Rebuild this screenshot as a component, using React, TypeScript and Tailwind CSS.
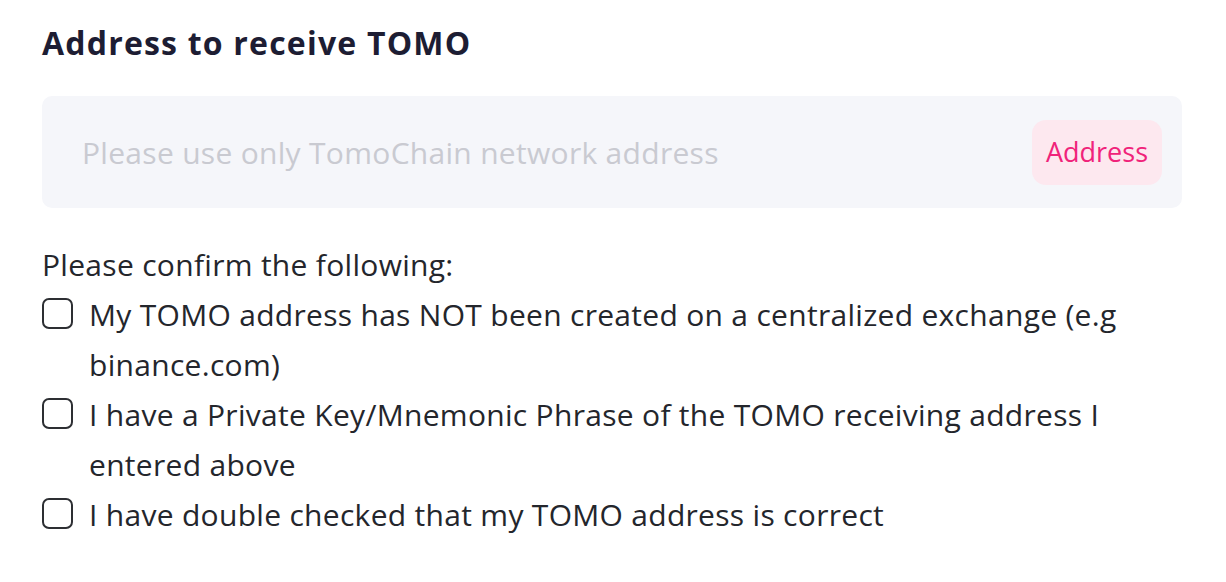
import { useState } from "react";

const confirmations = [
  "My TOMO address has NOT been created on a centralized exchange (e.g binance.com)",
  "I have a Private Key/Mnemonic Phrase of the TOMO receiving address I entered above",
  "I have double checked that my TOMO address is correct",
];

export default function App() {
  const [checked, setChecked] = useState<boolean[]>([false, false, false]);

  return (
    <div className="min-h-[582px] bg-white pl-[42px] pr-[44px] pt-[20px] font-['Open_Sans',sans-serif]">
      <h2 className="text-[32px] leading-[46px] font-bold tracking-[1.2px] text-[#1d1d33]">Address to receive TOMO</h2>

      <div className="mt-[30px] flex h-[112px] items-center justify-between rounded-[10px] bg-[#f5f6fa] pl-[40px] pr-[20px]">
        <input
          type="text"
          placeholder="Please use only TomoChain network address"
          className="flex-1 bg-transparent text-[30px] tracking-[0.3px] text-[#22252b] outline-none placeholder:text-[#c9cad1]"
        />
        <button className="h-[65px] rounded-[14px] bg-[#fde8ef] px-[14px] text-[27px] text-[#f0237a]">
          Address
        </button>
      </div>

      <p className="mt-[32px] text-[30px] leading-[50px] tracking-[0.3px] text-[#24262c]">Please confirm the following:</p>
      <ul>
        {confirmations.map((text, i) => (
          <li key={text} className="flex items-start gap-[16px] text-[30px] leading-[50px] tracking-[0.3px] text-[#24262c]">
            <button
              onClick={() => setChecked((c) => c.map((v, j) => (j === i ? !v : v)))}
              className="mt-[8px] size-[31px] shrink-0 rounded-[7px] border-2 border-[#2d2f33] bg-white"
            />
            <span>{text}</span>
          </li>
        ))}
      </ul>
    </div>
  );
}
